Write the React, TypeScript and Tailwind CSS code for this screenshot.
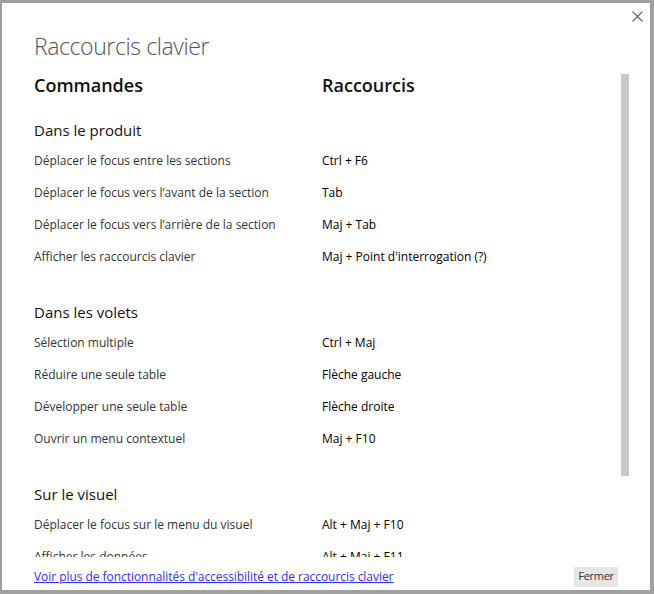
const sections = [
  {
    title: "Dans le produit",
    rows: [
      ["Déplacer le focus entre les sections", "Ctrl + F6"],
      ["Déplacer le focus vers l’avant de la section", "Tab"],
      ["Déplacer le focus vers l’arrière de la section", "Maj + Tab"],
      ["Afficher les raccourcis clavier", "Maj + Point d'interrogation (?)"],
    ],
  },
  {
    title: "Dans les volets",
    rows: [
      ["Sélection multiple", "Ctrl + Maj"],
      ["Réduire une seule table", "Flèche gauche"],
      ["Développer une seule table", "Flèche droite"],
      ["Ouvrir un menu contextuel", "Maj + F10"],
    ],
  },
  {
    title: "Sur le visuel",
    rows: [
      ["Déplacer le focus sur le menu du visuel", "Alt + Maj + F10"],
      ["Afficher les données", "Alt + Maj + F11"],
    ],
  },
];

export default function App() {
  return (
    <div
      className="h-[594px] w-[654px] bg-[#a0a0a0] pb-[4px] pl-[2px] pr-[4px] pt-[3px]"
      style={{ fontFamily: '"Open Sans", "Noto Sans", sans-serif' }}
    >
      <div className="relative flex h-full flex-col bg-white">
        <button className="absolute right-[6px] top-[6px] flex h-[14px] w-[14px] items-center justify-center text-[#666]">
          <svg width="11" height="11" viewBox="0 0 11 11" fill="none" stroke="currentColor" strokeWidth="1.1">
            <path d="M0.5 0.5 L10.5 10.5 M10.5 0.5 L0.5 10.5" />
          </svg>
        </button>

        <div className="h-[67px] shrink-0 pl-[32px] pt-[27px]">
          <h1 className="text-[23px] font-light leading-[32px] tracking-[-0.4px] text-[#555]">
            Raccourcis clavier
          </h1>
        </div>

        <div className="flex min-h-0 flex-1 overflow-hidden">
          <div className="flex-1 pl-[32px]">
            <div className="flex h-[31px] items-center text-[18px] font-semibold text-[#111]">
              <div className="w-[288px]">Commandes</div>
              <div>Raccourcis</div>
            </div>

            <div className="mt-[16px] flex flex-col gap-[27px]">
              {sections.map((section) => (
                <div key={section.title}>
                  <div className="flex h-[27px] items-center text-[15px] text-[#111]">
                    {section.title}
                  </div>
                  {section.rows.map(([command, shortcut]) => (
                    <div key={command} className="flex h-[32px] items-center pt-[1px] text-[12px]">
                      <div className="w-[288px] text-[#333]">{command}</div>
                      <div className="text-black">{shortcut}</div>
                    </div>
                  ))}
                </div>
              ))}
            </div>
          </div>

          <div className="mr-[21px] w-[8px] shrink-0 pt-[4px]">
            <div className="h-[402px] bg-[#c8c8c8]" />
          </div>
        </div>

        <div className="flex h-[33px] shrink-0 items-center justify-between pl-[32px] pr-[32px] pt-[6px]">
          <a href="#" className="text-[12px] tracking-[-0.05px] text-[#3030ff] underline">
            Voir plus de fonctionnalités d'accessibilité et de raccourcis clavier
          </a>
          <button className="h-[20px] w-[44px] bg-[#e6e6e6] text-[11px] tracking-[-0.3px] text-[#333]">
            Fermer
          </button>
        </div>
      </div>
    </div>
  );
}
